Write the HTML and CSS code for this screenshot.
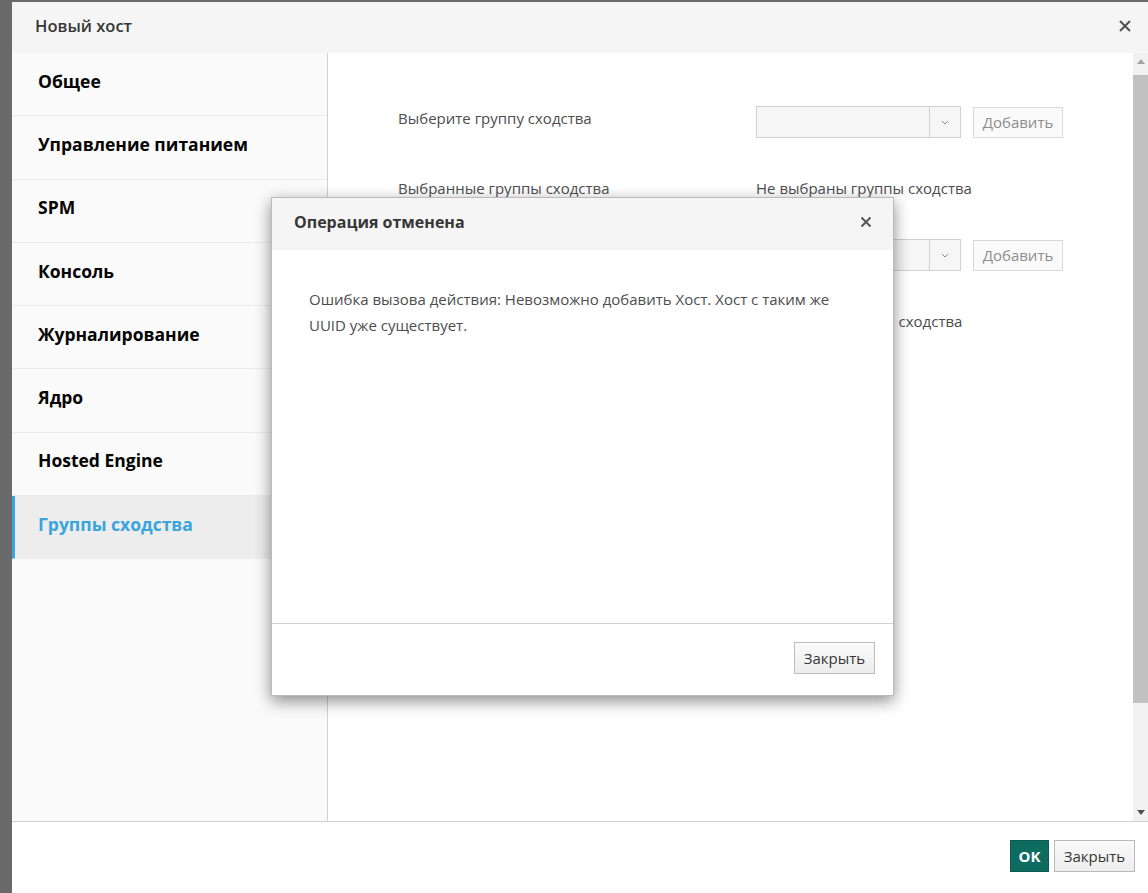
FILE: index.html
```html
<!DOCTYPE html>
<html lang="ru">
<head>
<meta charset="utf-8">
<title>Новый хост</title>
<link rel="stylesheet" href="styles.css">
</head>
<body>
<div class="dialog">
  <div class="dlg-header">
    <span class="dlg-title">Новый хост</span>
    <span class="close-x big">
      <svg width="14" height="14" viewBox="0 0 14 14"><path d="M2 2 L12 12 M12 2 L2 12" stroke="#4d5258" stroke-width="2" fill="none"/></svg>
    </span>
  </div>
  <div class="dlg-body">
    <ul class="nav">
      <li class="nav-item">Общее</li>
      <li class="nav-item">Управление питанием</li>
      <li class="nav-item">SPM</li>
      <li class="nav-item">Консоль</li>
      <li class="nav-item">Журналирование</li>
      <li class="nav-item">Ядро</li>
      <li class="nav-item">Hosted Engine</li>
      <li class="nav-item active">Группы сходства</li>
    </ul>
    <div class="content">
      <div class="form">
        <div class="row">
          <span class="label">Выберите группу сходства</span>
          <div class="controls">
            <div class="select"><span class="select-field"></span><span class="select-caret"><svg width="8" height="5" viewBox="0 0 8 5"><path d="M1 1 L4 4 L7 1" stroke="#8b8d8f" stroke-width="1" fill="none"/></svg></span></div>
            <span class="btn-add">Добавить</span>
          </div>
        </div>
        <div class="row row-text">
          <span class="label">Выбранные группы сходства</span>
          <span class="value">Не выбраны группы сходства</span>
        </div>
        <div class="row">
          <span class="label">Выберите метку сходства</span>
          <div class="controls">
            <div class="select"><span class="select-field"></span><span class="select-caret"><svg width="8" height="5" viewBox="0 0 8 5"><path d="M1 1 L4 4 L7 1" stroke="#8b8d8f" stroke-width="1" fill="none"/></svg></span></div>
            <span class="btn-add">Добавить</span>
          </div>
        </div>
        <div class="row row-text">
          <span class="label">Выбранные метки сходства</span>
          <span class="value">Не выбраны метки сходства</span>
        </div>
      </div>
      <div class="scrollbar">
        <span class="arrow up"></span>
        <span class="track"><span class="thumb"></span></span>
        <span class="arrow down"></span>
      </div>
    </div>
  </div>
  <div class="dlg-footer">
    <span class="btn btn-primary">OK</span>
    <span class="btn btn-default">Закрыть</span>
  </div>
</div>

<div class="modal">
  <div class="modal-header">
    <span class="modal-title">Операция отменена</span>
    <span class="close-x">
      <svg width="12" height="12" viewBox="0 0 12 12"><path d="M1.5 1.5 L10.5 10.5 M10.5 1.5 L1.5 10.5" stroke="#4d5258" stroke-width="1.8" fill="none"/></svg>
    </span>
  </div>
  <div class="modal-body">
    <p class="modal-text">Ошибка вызова действия: Невозможно добавить Хост. Хост с таким же UUID уже существует.</p>
  </div>
  <div class="modal-footer">
    <span class="btn btn-default">Закрыть</span>
  </div>
</div>
</body>
</html>
```

FILE: styles.css
```css
* { box-sizing: border-box; }

html, body {
  margin: 0;
  height: 100%;
}

body {
  background: #6a6a6a;
  font-family: "Open Sans", "Liberation Sans", sans-serif;
  color: #363636;
  padding: 2px 0 0 12px;
  overflow: hidden;
}

.dialog {
  width: 1136px;
  height: 891px;
  background: #fff;
  display: flex;
  flex-direction: column;
}

.dlg-header {
  height: 51px;
  flex: none;
  background: #f5f5f5;
  display: flex;
  align-items: center;
  justify-content: space-between;
  padding: 0 15px 4px 23px;
}

.dlg-title {
  font-size: 16.5px;
  font-weight: 600;
  color: #363636;
}

.close-x {
  display: flex;
  align-items: center;
  justify-content: center;
  width: 16px;
  height: 16px;
}

.dlg-body {
  height: 769px;
  flex: none;
  display: flex;
  border-bottom: 1px solid #d1d1d1;
}

.nav {
  list-style: none;
  margin: 0;
  padding: 0;
  width: 316px;
  flex: none;
  background: #fafafa;
  border-right: 1px solid #d1d1d1;
}

.nav-item {
  height: 63.3px;
  display: flex;
  align-items: center;
  padding: 0 0 7px 26px;
  font-size: 17.5px;
  font-weight: 700;
  color: #030303;
  border-bottom: 1px solid #ebebeb;
}

.nav-item.active {
  background: #ededed;
  color: #39a5dc;
  border-left: 3px solid #39a5dc;
  padding-left: 23px;
  border-bottom-color: #ededed;
}

.content {
  flex: 1;
  display: flex;
  min-width: 0;
}

.form {
  flex: 1;
  padding: 53px 0 0 70px;
}

.row {
  display: flex;
  align-items: center;
  height: 32px;
}

.row-text {
  height: 20px;
  margin: 40px 0 41px;
}

.label {
  width: 358px;
  flex: none;
  font-size: 15px;
  color: #4d4d4d;
  padding-bottom: 8px;
}

.row-text .label { padding-bottom: 0; }

.value {
  font-size: 15px;
  color: #4d4d4d;
}

.controls {
  display: flex;
  align-items: center;
  gap: 12px;
}

.select {
  width: 205px;
  height: 32px;
  display: flex;
  border: 1px solid #d1d1d1;
  background: #f6f6f6;
}

.select-field { flex: 1; }

.select-caret {
  width: 31px;
  border-left: 1px solid #d1d1d1;
  display: flex;
  align-items: center;
  justify-content: center;
}

.btn-add {
  width: 90px;
  height: 31px;
  display: flex;
  align-items: center;
  justify-content: center;
  border: 1px solid #d9d9d9;
  background: #fafafa;
  color: #8b8d8f;
  font-size: 15px;
}

.scrollbar {
  width: 15px;
  flex: none;
  background: #f1f1f1;
  display: flex;
  flex-direction: column;
  align-items: center;
}

.arrow {
  width: 15px;
  height: 17px;
  flex: none;
  display: flex;
  align-items: center;
  justify-content: center;
}

.arrow::before {
  content: "";
  border-left: 4px solid transparent;
  border-right: 4px solid transparent;
}

.arrow.up::before { border-bottom: 5px solid #a3a3a3; }
.arrow.down::before { border-top: 5px solid #505050; }

.track {
  flex: 1;
  width: 15px;
  padding: 5px 0 0 0;
}

.thumb {
  display: block;
  width: 15px;
  height: 628px;
  background: #c1c1c1;
}

.dlg-footer {
  flex: 1;
  display: flex;
  justify-content: flex-end;
  align-items: flex-start;
  gap: 5px;
  padding: 18px 13px 0 0;
}

.btn {
  height: 32px;
  display: flex;
  align-items: center;
  justify-content: center;
  font-size: 15px;
}

.btn-primary {
  width: 39px;
  background: #0e6b5f;
  border: 1px solid #0a5a50;
  color: #fff;
  font-weight: 700;
}

.btn-default {
  width: 81px;
  background: linear-gradient(#fafafa, #ededed);
  border: 1px solid #bbb;
  color: #363636;
}

.modal {
  position: absolute;
  left: 271px;
  top: 197px;
  width: 623px;
  height: 499px;
  background: #fff;
  border: 1px solid #bbb;
  box-shadow: 0 5px 15px rgba(0, 0, 0, 0.45);
  display: flex;
  flex-direction: column;
}

.modal-header {
  height: 52px;
  flex: none;
  background: #f5f5f5;
  display: flex;
  align-items: center;
  justify-content: space-between;
  padding: 0 19px 5px 22px;
}

.modal-title {
  font-size: 16px;
  font-weight: 700;
  color: #363636;
}

.modal-body {
  flex: 1;
  padding: 36px 30px 0 37px;
  border-bottom: 1px solid #d1d1d1;
}

.modal-text {
  margin: 0;
  font-size: 15px;
  line-height: 26px;
  color: #4d4d4d;
}

.modal-footer {
  height: 71px;
  flex: none;
  display: flex;
  justify-content: flex-end;
  align-items: flex-start;
  padding: 18px 18px 0 0;
}

.modal-footer .btn-default {
  width: 81px;
  height: 32px;
}
```
